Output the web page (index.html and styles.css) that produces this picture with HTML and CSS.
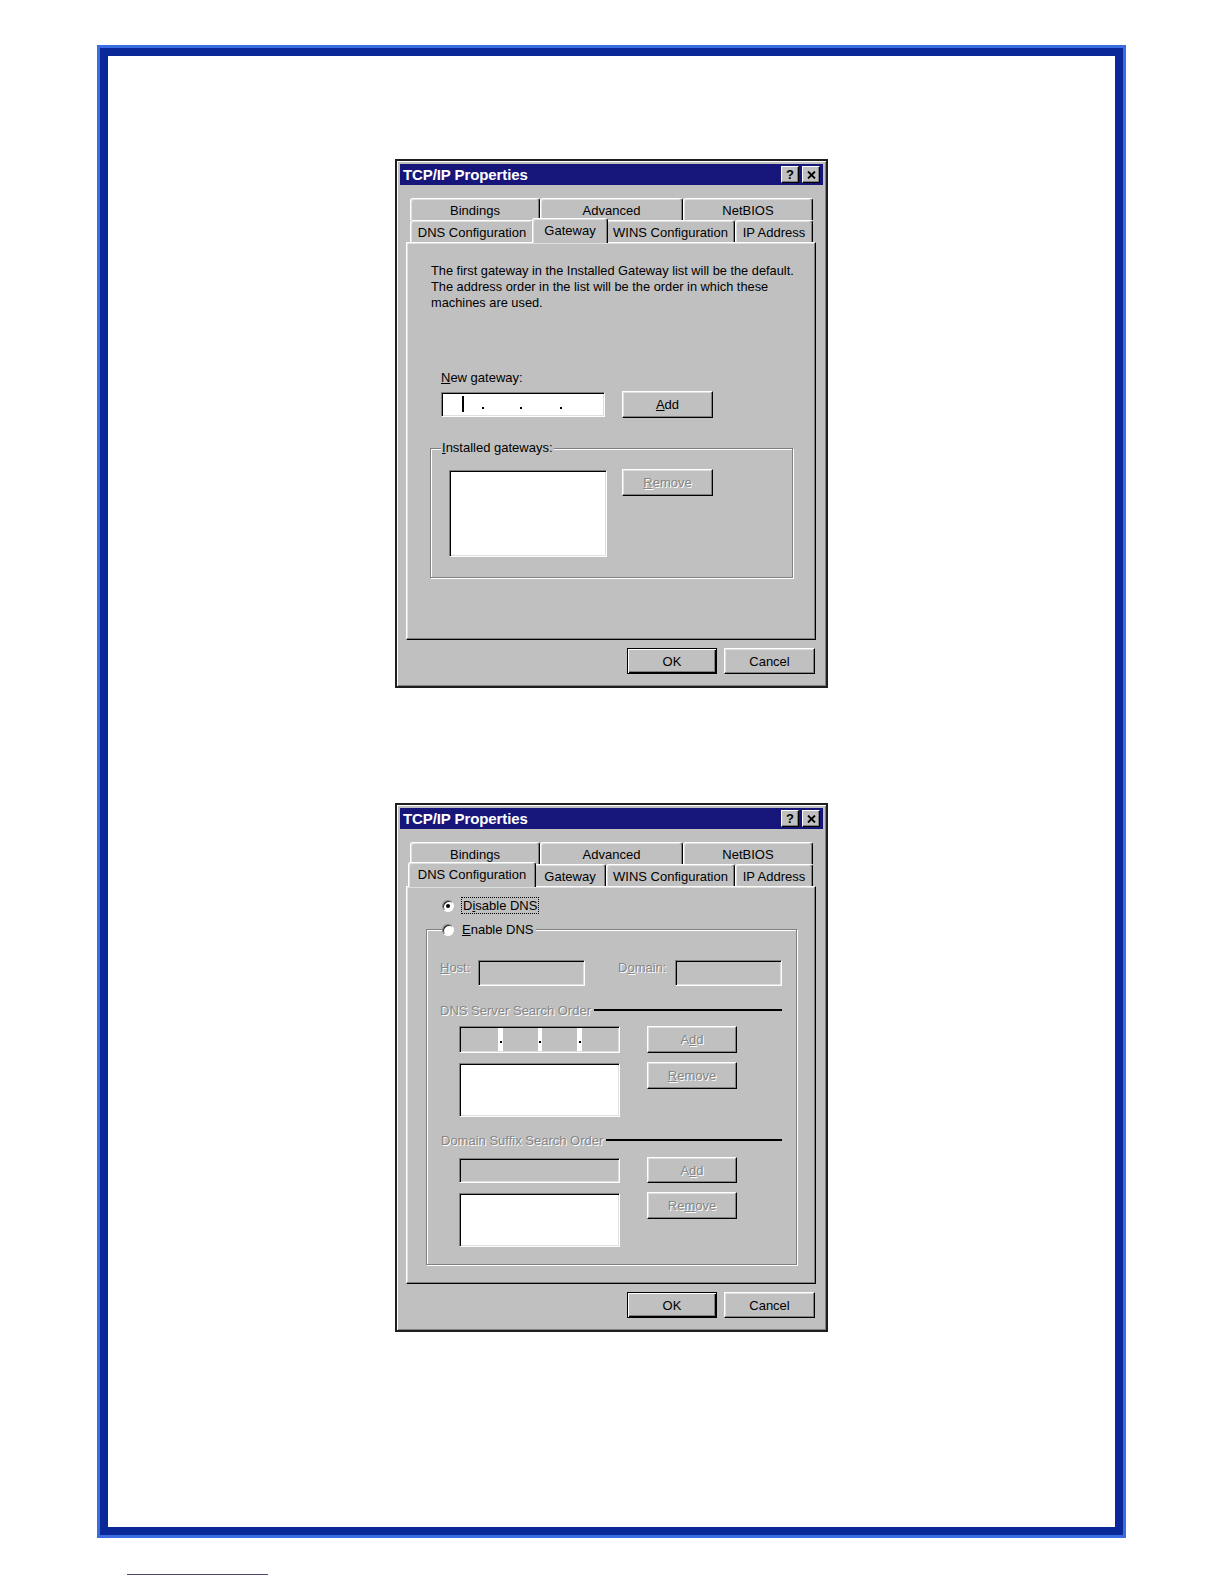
FILE: index.html
```html
<!DOCTYPE html>
<html>
<head>
<meta charset="utf-8">
<title>TCP/IP Properties</title>
<link rel="stylesheet" href="styles.css">
</head>
<body>
<div class="page">
  <div class="frame-outer">
    <div class="frame">

      <div class="dialog">
        <div class="titlebar">
          <span class="title">TCP/IP Properties</span>
          <div class="tbtns">
            <span class="tbtn">?</span>
            <span class="tbtn"><svg width="9" height="8" viewBox="0 0 9 8"><path d="M1 0.5 L8 7.5 M8 0.5 L1 7.5" stroke="#000" stroke-width="1.8" fill="none"/></svg></span>
          </div>
        </div>
        <div class="sheet">
          <div class="tabs">
            <div class="tabrow">
              <div class="tab w-bind">Bindings</div><div class="tab w-adv">Advanced</div><div class="tab w-net">NetBIOS</div>
            </div>
            <div class="tabrow">
              <div class="tab w-dns">DNS Configuration</div><div class="tab w-gw sel">Gateway</div><div class="tab w-wins">WINS Configuration</div><div class="tab w-ip">IP Address</div>
            </div>
          </div>
          <div class="panel p1">
            <p class="desc">The first gateway in the Installed Gateway list will be the default.<br>The address order in the list will be the order in which these<br>machines are used.</p>
            <div class="ngw-label"><u>N</u>ew gateway:</div>
            <div class="ngw-row">
              <div class="sunken ip1">
                <span class="seg seg-a"><span class="caret"></span></span><span class="dot"></span><span class="seg seg-b"></span><span class="dot"></span><span class="seg seg-c"></span><span class="dot"></span><span class="seg"></span>
              </div>
              <div class="btn add1"><span><u>A</u>dd</span></div>
            </div>
            <div class="group group1">
              <div class="glabel"><u>I</u>nstalled gateways:</div>
              <div class="grow1">
                <div class="sunken list1"></div>
                <div class="btn rem1 dis"><span><u>R</u>emove</span></div>
              </div>
            </div>
          </div>
        </div>
        <div class="footer">
          <div class="btn default ok">OK</div>
          <div class="btn cancel">Cancel</div>
        </div>
      </div>

      <div class="dialog d2">
        <div class="titlebar">
          <span class="title">TCP/IP Properties</span>
          <div class="tbtns">
            <span class="tbtn">?</span>
            <span class="tbtn"><svg width="9" height="8" viewBox="0 0 9 8"><path d="M1 0.5 L8 7.5 M8 0.5 L1 7.5" stroke="#000" stroke-width="1.8" fill="none"/></svg></span>
          </div>
        </div>
        <div class="sheet">
          <div class="tabs">
            <div class="tabrow">
              <div class="tab w-bind">Bindings</div><div class="tab w-adv">Advanced</div><div class="tab w-net">NetBIOS</div>
            </div>
            <div class="tabrow">
              <div class="tab w-dns sel">DNS Configuration</div><div class="tab w-gw">Gateway</div><div class="tab w-wins">WINS Configuration</div><div class="tab w-ip">IP Address</div>
            </div>
          </div>
          <div class="panel p2">
            <div class="radio-row">
              <span class="radio"><span class="rdot"></span></span>
              <span class="focus">D<u>i</u>sable DNS</span>
            </div>
            <div class="group group2">
              <div class="glabel2">
                <span class="radio"></span>
                <span class="gl-text"><u>E</u>nable DNS</span>
              </div>
              <div class="hrow">
                <span class="dis lbl-host"><u>H</u>ost:</span>
                <div class="sunken gray inp107"></div>
                <span class="dis lbl-dom">D<u>o</u>main:</span>
                <div class="sunken gray inp107"></div>
              </div>
              <div class="shead">
                <span class="dis">DNS Server Search Order</span>
                <span class="hline"></span>
              </div>
              <div class="irow r1">
                <div class="sunken gray ip2">
                  <span class="gseg gs-a"></span><span class="wsep ws5"><span class="dot"></span></span><span class="gseg gs-b"></span><span class="wsep ws4"><span class="dot"></span></span><span class="gseg gs-c"></span><span class="wsep ws5"><span class="dot"></span></span><span class="gseg gs-d"></span>
                </div>
                <div class="btn dis add2"><span>A<u>d</u>d</span></div>
              </div>
              <div class="irow r2">
                <div class="sunken list2"></div>
                <div class="btn dis rem2"><span><u>R</u>emove</span></div>
              </div>
              <div class="shead sh2">
                <span class="dis">Domain Suffix Search Order</span>
                <span class="hline"></span>
              </div>
              <div class="irow r3">
                <div class="sunken gray inp2"></div>
                <div class="btn dis add3"><span>A<u>d</u>d</span></div>
              </div>
              <div class="irow r4">
                <div class="sunken list2"></div>
                <div class="btn dis rem2"><span>Re<u>m</u>ove</span></div>
              </div>
            </div>
          </div>
        </div>
        <div class="footer">
          <div class="btn default ok">OK</div>
          <div class="btn cancel">Cancel</div>
        </div>
      </div>

    </div>
  </div>
  <div class="footline"></div>
</div>
</body>
</html>
```
FILE: styles.css
```css
* { box-sizing: border-box; }
body {
  margin: 0;
  background: #fff;
  font-family: "Liberation Sans", Arial, sans-serif;
  font-size: 13px;
  color: #000;
}
u { text-decoration: underline; text-underline-offset: 1px; }

.page { padding: 45px 0 0 97px; }
.frame-outer {
  width: 1029px;
  height: 1493px;
  border: 3px solid #3b6de2;
}
.frame {
  height: 100%;
  border: 8px solid #0a2898;
  display: flex;
  flex-direction: column;
  align-items: center;
  padding-top: 103px;
}
.footline {
  margin: 36px 0 0 30px;
  width: 141px;
  height: 1px;
  background: #4a4a70;
}

/* dialog */
.dialog {
  width: 433px;
  height: 529px;
  flex: none;
  background: #c0c0c0;
  border: 2px solid #1e1e1e;
  padding: 3px;
  box-shadow: inset 1px 1px 0 #fff, inset -1px -1px 0 #808080;
  display: flex;
  flex-direction: column;
}
.d2 { margin-top: 115px; }

.titlebar {
  height: 21px;
  flex: none;
  background: #16167a;
  display: flex;
  align-items: center;
  justify-content: space-between;
  padding: 0 3px 0 3px;
}
.title {
  color: #fff;
  font-weight: bold;
  font-size: 15px;
  letter-spacing: -0.1px;
}
.tbtns { display: flex; gap: 3px; }
.tbtn {
  width: 18px;
  height: 17px;
  background: #c0c0c0;
  border: 1px solid;
  border-color: #fff #000 #000 #fff;
  box-shadow: inset -1px -1px 0 #808080;
  display: flex;
  align-items: center;
  justify-content: center;
  font-weight: bold;
  font-size: 13px;
  line-height: 1;
}

.sheet { margin: 13px 0 0 6px; width: 410px; }
.tabs { padding-left: 4px; }
.tabrow { display: flex; height: 22px; }
.tab {
  flex: none;
  height: 22px;
  background: #c0c0c0;
  border-top: 1px solid #fff;
  border-left: 1px solid #fff;
  border-right: 1px solid #000;
  border-radius: 3px 3px 0 0;
  box-shadow: inset -1px 0 0 #808080, inset 1px 1px 0 #dfdfdf;
  display: flex;
  align-items: center;
  justify-content: center;
  padding-top: 1px;
  white-space: nowrap;
}
.tab.sel {
  height: 25px;
  margin: -2px -2px 0;
  align-self: flex-start;
  position: relative;
  z-index: 1;
  padding-bottom: 3px;
}
.w-bind { width: 130px; }
.w-adv { width: 143px; }
.w-net { width: 130px; }
.w-dns { width: 124px; }
.w-dns.sel { width: 128px; }
.w-gw { width: 72px; }
.w-gw.sel { width: 76px; }
.w-wins { width: 129px; }
.w-ip { width: 78px; }

.panel {
  width: 410px;
  height: 398px;
  border: 1px solid;
  border-color: #fff #000 #000 #fff;
  box-shadow: inset -1px -1px 0 #808080, inset 1px 1px 0 #dfdfdf;
}

/* common controls */
.sunken {
  flex: none;
  background: #fff;
  border: 1px solid;
  border-color: #808080 #fff #fff #808080;
  box-shadow: inset 1px 1px 0 #000, inset -1px -1px 0 #dfdfdf;
}
.sunken.gray { background: #c0c0c0; }
.btn {
  flex: none;
  background: #c0c0c0;
  border: 1px solid;
  border-color: #fff #000 #000 #fff;
  box-shadow: inset -1px -1px 0 #808080, inset 1px 1px 0 #dfdfdf;
  display: flex;
  align-items: center;
  justify-content: center;
}
.btn.default {
  border: 1px solid #000;
  box-shadow: inset 1px 1px 0 #fff, inset -1px -1px 0 #000, inset -2px -2px 0 #808080;
}
.dis { color: #868686; text-shadow: 1px 1px 0 #fff; }
.group {
  border: 1px solid #808080;
  box-shadow: inset 1px 1px 0 #fff, 1px 1px 0 #fff;
}
.radio {
  flex: none;
  width: 12px;
  height: 12px;
  border-radius: 50%;
  background: #fff;
  border: 1px solid;
  border-color: #808080 #fff #fff #808080;
  box-shadow: inset 1px 1px 0 #202020;
  display: flex;
  align-items: center;
  justify-content: center;
}
.rdot { width: 4px; height: 4px; border-radius: 50%; background: #000; }

/* panel 1 */
.p1 { padding: 20px 0 0 24px; }
.desc { margin: 0; line-height: 16px; font-size: 12.8px; white-space: nowrap; }
.ngw-label { margin: 59px 0 0 10px; line-height: 16px; }
.ngw-row { display: flex; align-items: flex-start; margin: 5px 0 0 10px; }
.ip1 { width: 164px; height: 25px; margin-top: 1px; display: flex; }
.seg { display: block; }
.seg-a { width: 39px; }
.seg-b { width: 34px; }
.seg-c { width: 36px; }
.caret { display: block; width: 2px; height: 16px; background: #000; margin: 3px 0 0 20px; }
.ip1 .dot { width: 4px; display: flex; align-items: flex-end; justify-content: center; padding-bottom: 7px; }
.ip1 .dot::after { content: ""; width: 2px; height: 2px; background: #000; }
.add1 { width: 91px; height: 27px; margin-left: 17px; }
.group1 { width: 363px; height: 130px; margin: 30px 0 0 -1px; }
.glabel {
  display: table;
  margin: -9px 0 0 10px;
  padding: 0 1px;
  background: #c0c0c0;
  line-height: 16px;
}
.grow1 { display: flex; align-items: flex-start; margin: 14px 0 0 18px; }
.list1 { width: 158px; height: 87px; }
.rem1 { width: 91px; height: 27px; margin: -1px 0 0 15px; }

.footer {
  display: flex;
  justify-content: flex-end;
  gap: 7px;
  margin-top: 8px;
  padding-right: 8px;
}
.ok { width: 90px; height: 26px; }
.cancel { width: 91px; height: 26px; }

/* panel 2 */
.p2 { padding: 10px 0 0 19px; }
.radio-row { display: flex; align-items: center; height: 17px; margin-left: 16px; }
.focus {
  margin-left: 7px;
  border: 1px dotted #000;
  height: 17px;
  line-height: 15px;
  padding: 0 1px;
}
.group2 { width: 371px; height: 336px; margin-top: 15px; }
.glabel2 {
  display: flex;
  align-items: center;
  width: max-content;
  height: 17px;
  margin: -9px 0 0 15px;
  padding-right: 2px;
  background: #c0c0c0;
}
.gl-text { margin-left: 8px; }
.hrow { display: flex; align-items: flex-start; height: 26px; margin-top: 22px; padding-left: 13px; }
.hrow .dis { line-height: 16px; }
.lbl-host { width: 38px; }
.lbl-dom { width: 57px; margin-left: 33px; }
.inp107 { width: 107px; height: 26px; }
.shead { display: flex; align-items: center; height: 16px; margin-top: 16px; padding: 0 14px 0 13px; }
.shead.sh2 { padding-left: 14px; margin-top: 15px; }
.hline { flex: 1; height: 2px; background: #000; margin-left: 3px; }
.irow { display: flex; align-items: flex-start; padding-left: 32px; }
.r1 { margin-top: 8px; }
.r2 { margin-top: 9px; }
.r3 { margin-top: 9px; }
.r4 { margin-top: 9px; }
.ip2 { width: 161px; height: 27px; display: flex; padding: 1px 0 1px 1px; }
.gseg { display: block; background: #c0c0c0; }
.gs-a { width: 37px; }
.gs-b { width: 35px; }
.gs-c { width: 35px; }
.gs-d { width: 36px; }
.wsep { background: #fff; display: flex; align-items: flex-end; justify-content: center; padding-bottom: 8px; }
.ws5 { width: 5px; }
.ws4 { width: 4px; }
.wsep .dot { width: 2px; height: 2px; background: #000; }
.add2 { width: 90px; height: 27px; margin-left: 27px; }
.list2 { width: 161px; height: 54px; margin-top: 1px; }
.rem2 { width: 90px; height: 27px; margin-left: 27px; }
.inp2 { width: 161px; height: 25px; margin-top: 1px; }
.add3 { width: 90px; height: 26px; margin-left: 27px; }
```
